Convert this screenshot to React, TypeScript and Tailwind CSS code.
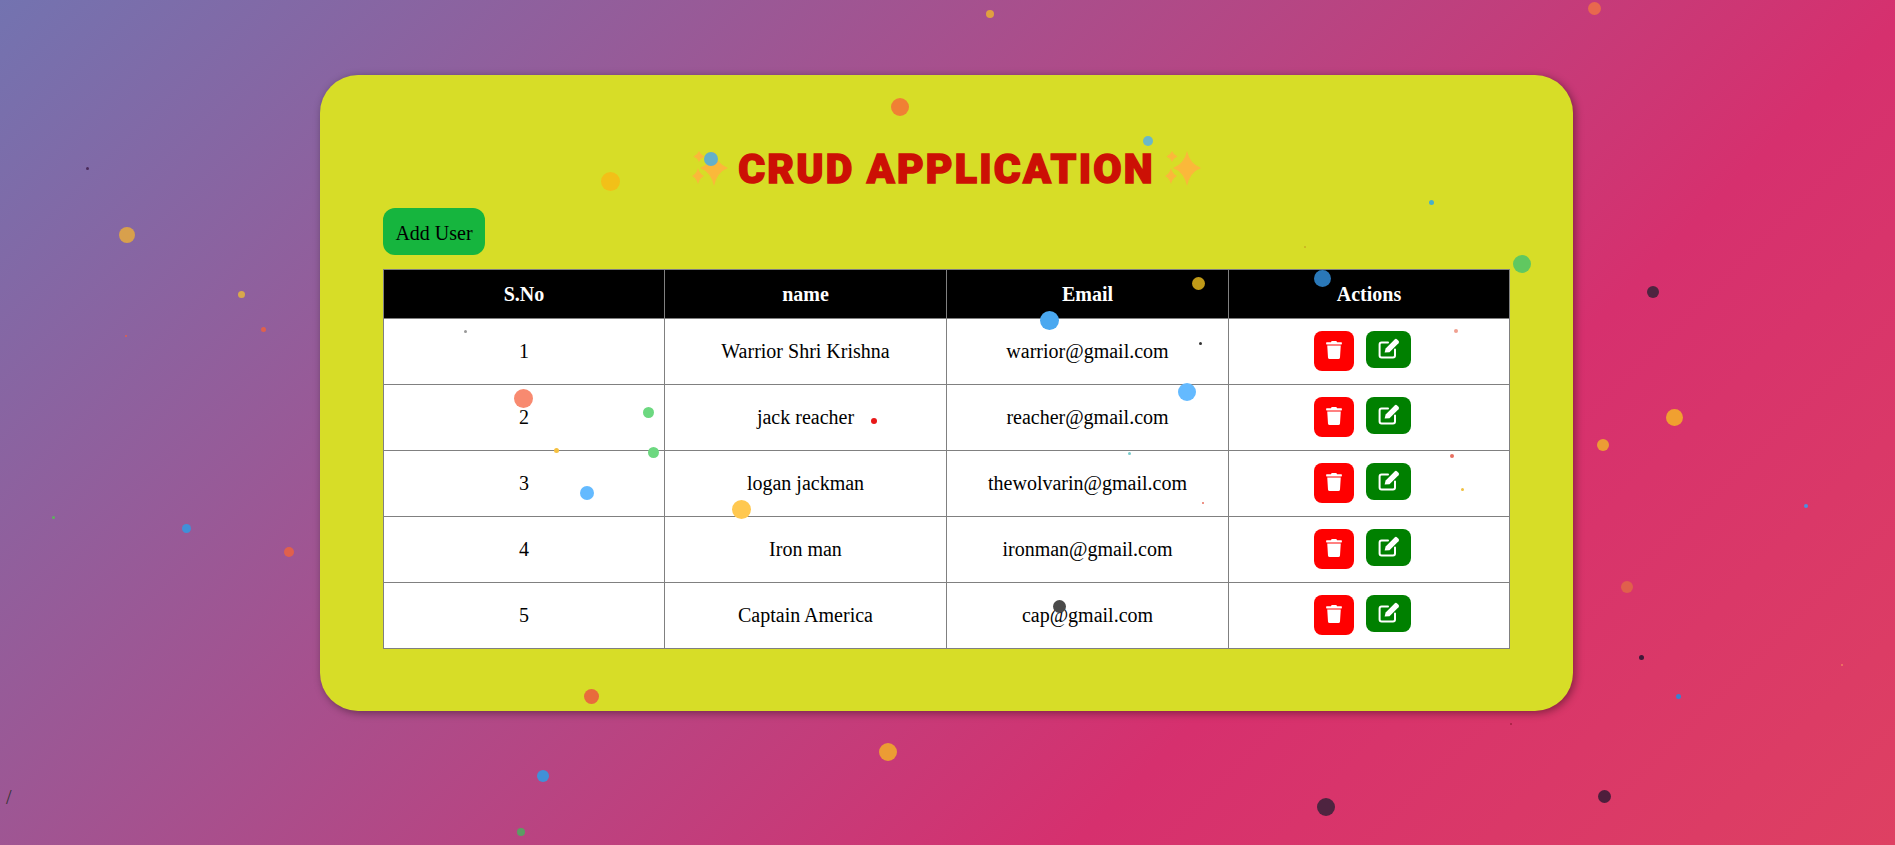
import { FaTrash } from "react-icons/fa"

const users = [
  { id: 1, name: "Warrior Shri Krishna", email: "warrior@gmail.com" },
  { id: 2, name: "jack reacher", email: "reacher@gmail.com" },
  { id: 3, name: "logan jackman", email: "thewolvarin@gmail.com" },
  { id: 4, name: "Iron man", email: "ironman@gmail.com" },
  { id: 5, name: "Captain America", email: "cap@gmail.com" },
]

// confetti dots: x, y, size, colour (centre coords in the full page)
const dots: [number, number, number, string][] = [
  [990, 14, 8, "#e0a040"], [1594, 8, 13, "#e8684e"], [900, 107, 18, "#f08034"], [1148, 141, 10, "#6ab8c8"],
  [711, 159, 14, "#64b0c8"], [610, 181, 19, "#f2c018"], [87, 168, 3, "#4a2a5a"], [127, 235, 16, "#d8a04c"],
  [241, 294, 7, "#d8a84c"], [263, 329, 5, "#e0604c"], [126, 336, 2, "#e0604c"], [465, 331, 3, "#999999"],
  [1431, 202, 5, "#4ab0c8"], [1305, 247, 2, "#c8b020"], [1522, 264, 18, "#60c860"], [1322, 278, 17, "#2a78b8"],
  [1198, 283, 13, "#c09a18"], [1653, 292, 12, "#4e2440"], [1049, 320, 19, "#4aa8f0"], [1456, 331, 4, "#f0a090"],
  [1200, 343, 3, "#333333"], [523, 398, 19, "#f88a70"], [1187, 392, 18, "#64baff"], [648, 412, 11, "#6cd880"],
  [874, 421, 6, "#e81818"], [1674, 417, 17, "#f0a030"], [1603, 445, 12, "#ec9c34"], [556, 450, 5, "#f5c040"],
  [653, 452, 11, "#6cd880"], [1129, 453, 3, "#77cccc"], [1452, 456, 4, "#e87060"], [1462, 489, 3, "#f0c040"],
  [587, 493, 14, "#64baff"], [741, 509, 19, "#ffc850"], [1203, 503, 2, "#e87060"], [1806, 506, 4, "#4a90e0"],
  [53, 517, 3, "#60b060"], [186, 528, 9, "#4090d8"], [289, 552, 10, "#e0604c"], [1627, 587, 12, "#e0604c"],
  [1059, 606, 13, "#4a4a4a"], [1641, 657, 5, "#401838"], [1842, 665, 2, "#f08060"], [1678, 696, 5, "#3a80d0"],
  [591, 696, 15, "#e86c3c"], [1511, 724, 2, "#a02040"], [888, 752, 18, "#ec9c34"], [543, 776, 12, "#4090d8"],
  [521, 832, 8, "#5c9c64"], [1326, 807, 18, "#4e2440"], [1604, 796, 13, "#4e1e3c"],
]

const Sparkles = () => (
  <svg viewBox="0 0 36 36" className="w-9 h-9 shrink-0" fill="#fbb83a">
    <path d="M22 0 Q25 13 36 17 Q25 21 22 35 Q19 21 8 17 Q19 13 22 0Z" />
    <path d="M7 0 Q8.6 4 12.5 5.5 Q8.6 7 7 11 Q5.4 7 1.5 5.5 Q5.4 4 7 0Z" />
    <path d="M6 17 Q7.6 23 12 25 Q7.6 27 6 33 Q4.4 27 0 25 Q4.4 23 6 17Z" />
  </svg>
)

const EditIcon = () => (
  <svg viewBox="0 0 22 21" className="w-[22px] h-[21px]">
    <path d="M10 4.5H3.6a2 2 0 0 0-2 2V17.4a2 2 0 0 0 2 2H15a2 2 0 0 0 2-2V11.5" fill="none" stroke="currentColor" strokeWidth="2" strokeLinecap="round" />
    <path d="M6.6 14.6 L7.6 10.4 L16.6 1.4 a1.8 1.8 0 0 1 2.5 0 l1.4 1.4 a1.8 1.8 0 0 1 0 2.5 L11.5 14.2Z" fill="currentColor" />
  </svg>
)

const App: React.FC = () => {
  const cell = "border border-[#808080] text-center"

  return (
    <div className="relative h-[845px] w-[1895px] overflow-hidden pt-[75px] bg-[linear-gradient(135deg,#7373b0_0%,#d6306e_70%,#de4062_100%)] font-['Liberation_Serif',serif] text-[20px] text-black">
      <div className="ml-[320px] w-[1253px] h-[636px] rounded-[38px] bg-[#d7dd27] pt-[76px] pl-[63px] shadow-[2px_2px_8px_rgba(0,0,0,0.4)]">
        <div className="flex h-[57px] w-[1127px] items-start justify-center gap-[10px]">
          <Sparkles />
          <h1 className="font-['Roboto',sans-serif] text-[41px] leading-[36px] font-black text-[#cc1005] uppercase tracking-[2.2px] [-webkit-text-stroke:1.5px_#cc1005]">
            Crud Application
          </h1>
          <Sparkles />
        </div>
        <button className="block w-[102px] h-[47px] pt-[2px] rounded-xl bg-[#16b53e] text-center">Add User</button>
        <table className="mt-[14px] w-[1127px] table-fixed border-collapse bg-white">
          <thead>
            <tr className="h-[49px] bg-black text-white">
              <th className={`${cell} w-[281px] font-bold`}>S.No</th>
              <th className={`${cell} w-[282px] font-bold`}>name</th>
              <th className={`${cell} w-[282px] font-bold`}>Email</th>
              <th className={`${cell} w-[281px] font-bold`}>Actions</th>
            </tr>
          </thead>
          <tbody>
            {users.map((u) => (
              <tr key={u.id} className="h-[66px]">
                <td className={`${cell} pb-[2px]`}>{u.id}</td>
                <td className={`${cell} pb-[2px]`}>{u.name}</td>
                <td className={`${cell} pb-[2px]`}>{u.email}</td>
                <td className={cell}>
                  <div className="flex items-start justify-center gap-3 pr-[13px] pb-[1px]">
                    <button className="flex h-10 w-10 pb-[2px] items-center justify-center rounded-lg bg-[#ff0000] text-white">
                      <FaTrash size={18} />
                    </button>
                    <button className="flex h-[37px] w-[45px] pb-[2px] items-center justify-center rounded-lg bg-[#008000] text-white">
                      <EditIcon />
                    </button>
                  </div>
                </td>
              </tr>
            ))}
          </tbody>
        </table>
      </div>
      <div className="pl-[6px] pt-[75px] leading-[23px] text-[#333]">/</div>

      {/* confetti layer */}
      <div className="absolute inset-0 pointer-events-none">
        {dots.map(([x, y, size, color], i) => (
          <span
            key={i}
            className="absolute rounded-full"
            style={{ left: x - size / 2, top: y - size / 2, width: size, height: size, backgroundColor: color }}
          />
        ))}
      </div>
    </div>
  )
}

export default App
